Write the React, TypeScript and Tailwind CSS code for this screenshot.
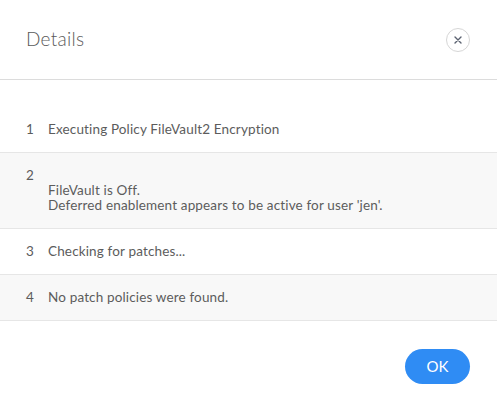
import React from 'react';

const rows = [
  { n: 1, text: 'Executing Policy FileVault2 Encryption' },
  { n: 2, text: "\nFileVault is Off.\nDeferred enablement appears to be active for user 'jen'." },
  { n: 3, text: 'Checking for patches...' },
  { n: 4, text: 'No patch policies were found.' },
];

export default function App() {
  return (
    <div className="w-[497px] h-[410px] bg-white text-[#5c5c5c]" style={{ fontFamily: 'Lato, "Open Sans", sans-serif' }}>
      <div className="h-[80px] flex items-center justify-between pl-[26px] pr-[27px] border-b border-[#dcdcdc]">
        <h2 className="text-[19px] text-[#5a5a5a] font-light tracking-[0.3px]">Details</h2>
        <button type="button" className="w-[24px] h-[24px] rounded-full border border-[#d6d6d6] flex items-center justify-center text-[#5b6270]">
          <svg width="8" height="8" viewBox="0 0 8 8" fill="none" stroke="currentColor" strokeWidth="1.4" strokeLinecap="round">
            <path d="M1 1L7 7M7 1L1 7" />
          </svg>
        </button>
      </div>
      <div className="pt-[27px]">
        {rows.map((r) => (
          <div key={r.n} className={`flex py-[15px] pl-[26px] text-[13.5px] tracking-[0.15px] leading-[15px] border-b border-[#e6e6e6] ${r.n % 2 === 0 ? 'bg-[#f8f8f8]' : 'bg-white'}`}>
            <div className="w-[22px] shrink-0">{r.n}</div>
            <div className="whitespace-pre-line">{r.text}</div>
          </div>
        ))}
      </div>
      <div className="flex justify-end pr-[27px] pt-[28px]">
        <button type="button" className="w-[65px] h-[35px] rounded-full bg-[#2f8cf4] text-white text-[15px]">OK</button>
      </div>
    </div>
  );
}
